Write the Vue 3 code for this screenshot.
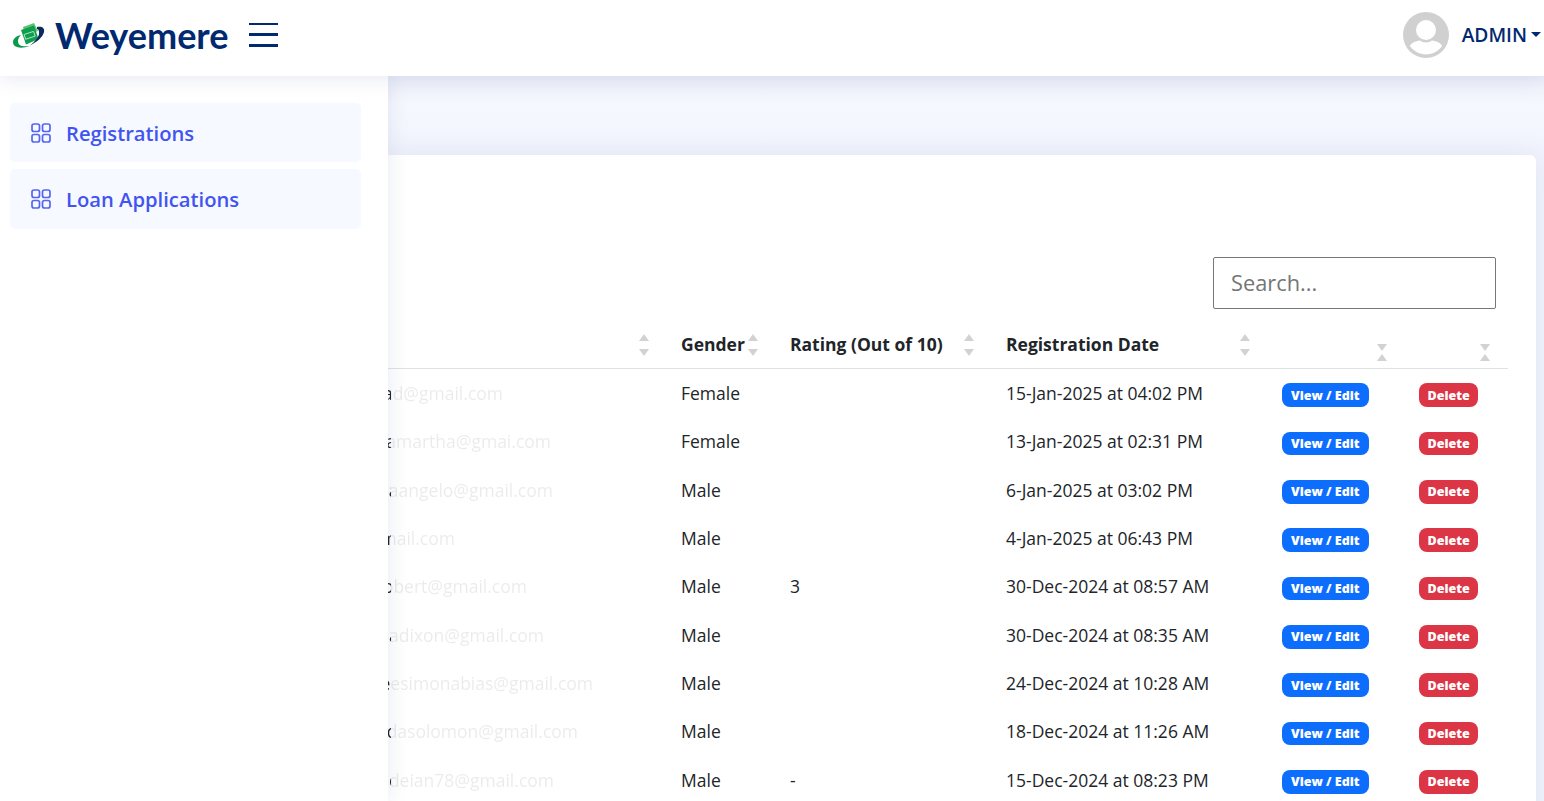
<template>
  <div class="page">
    <header class="topbar">
      <div class="brand">
        <svg class="logo" width="32" height="28" viewBox="0 0 32 28">
          <path d="M10 5 L21 1 L25 9 L12 14 Z" fill="#5cc46f" />
          <path d="M8 8 L21 3.500 L25.500 17 L13 22.500 Z" fill="#0f9d50" />
          <path d="M0 20 C0 26 8 27 17 24 C10 25 5 24 5 19 C5 17 6 15 8 13 C3 14 0 17 0 20 Z" fill="#0b9a4a" />
          <path d="M24 5 C29 4 32 6 31 10 C30 15 24 20 16 24 C22 20 27 14 26 10 C26 8 25 7 24 7 Z" fill="#0d2a5c" />
          <rect x="11.500" y="11" width="10" height="5" transform="rotate(-18 16 13)" fill="none" stroke="#c8ecd0" stroke-width="0.8" />
        </svg>
        <span class="brand-name">Weyemere</span>
      </div>
      <button class="menu-btn" aria-label="Menu">
        <span></span><span></span><span></span>
      </button>
      <div class="user">
        <svg class="avatar" width="46" height="46" viewBox="0 0 46 46">
          <defs>
            <clipPath id="circle-clip"><circle cx="23" cy="23" r="19.500" /></clipPath>
          </defs>
          <circle cx="23" cy="23" r="23" fill="#d0d0d0" />
          <circle cx="23" cy="18" r="10" fill="#fff" />
          <g clip-path="url(#circle-clip)">
            <path d="M6 46 L6 36 C7 31 13 29 17 28.500 C20 31 26 31 29 28.500 C33 29 39 31 40 36 L40 46 Z" fill="#fff" />
          </g>
        </svg>
        <span class="user-name">ADMIN</span>
        <span class="caret"></span>
      </div>
    </header>

    <div class="body-row">
      <aside class="sidebar">
        <a v-for="link in links" :key="link" class="side-link">
          <svg width="20" height="20" viewBox="0 0 20 20" fill="none" stroke="#5565f2" stroke-width="1.700">
            <rect x="1" y="1" width="7.500" height="7.500" rx="2" />
            <rect x="11.500" y="1" width="7.500" height="7.500" rx="2" />
            <rect x="1" y="11.500" width="7.500" height="7.500" rx="2" />
            <rect x="11.500" y="11.500" width="7.500" height="7.500" rx="2" />
          </svg>
          <span>{{ link }}</span>
        </a>
      </aside>

      <main class="content">
        <section class="card">
          <div class="search-row">
            <input class="search" type="text" placeholder="Search..." />
          </div>
          <div class="table">
            <div class="row head">
              <div v-for="col in columns" :key="col.key" class="th">
                <span>{{ col.label }}</span>
                <span class="sort" :class="{ flipped: col.flipped }">
                  <i class="up"></i><i class="down"></i>
                </span>
              </div>
            </div>
            <div v-for="r in rows" :key="r.email" class="row">
              <div class="email" :style="{ width: r.end + 'px' }"><span>{{ r.email }}</span></div>
              <div class="td">{{ r.gender }}</div>
              <div class="td">{{ r.rating }}</div>
              <div class="td">{{ r.date }}</div>
              <div class="td"><button class="btn blue">View / Edit</button></div>
              <div class="td"><button class="btn red">Delete</button></div>
            </div>
          </div>
        </section>
      </main>
    </div>
  </div>
</template>

<script setup>
const links = ['Registrations', 'Loan Applications']

const columns = [
  { key: 'email', label: '' },
  { key: 'gender', label: 'Gender' },
  { key: 'rating', label: 'Rating (Out of 10)' },
  { key: 'date', label: 'Registration Date' },
  { key: 'edit', label: '', flipped: true },
  { key: 'del', label: '', flipped: true },
]

// end = how far the clipped email text reaches past the sidebar edge
const rows = [
  { email: 'ad@gmail.com', end: 115, gender: 'Female', rating: '', date: '15-Jan-2025 at 04:02 PM' },
  { email: 'eamartha@gmai.com', end: 163, gender: 'Female', rating: '', date: '13-Jan-2025 at 02:31 PM' },
  { email: 'iaangelo@gmail.com', end: 165, gender: 'Male', rating: '', date: '6-Jan-2025 at 03:02 PM' },
  { email: 'mail.com', end: 67, gender: 'Male', rating: '', date: '4-Jan-2025 at 06:43 PM' },
  { email: 'obert@gmail.com', end: 139, gender: 'Male', rating: '3', date: '30-Dec-2024 at 08:57 AM' },
  { email: 'aadixon@gmail.com', end: 156, gender: 'Male', rating: '', date: '30-Dec-2024 at 08:35 AM' },
  { email: 'eesimonabias@gmail.com', end: 205, gender: 'Male', rating: '', date: '24-Dec-2024 at 10:28 AM' },
  { email: 'xdasolomon@gmail.com', end: 190, gender: 'Male', rating: '', date: '18-Dec-2024 at 11:26 AM' },
  { email: 'odeian78@gmail.com', end: 166, gender: 'Male', rating: '-', date: '15-Dec-2024 at 08:23 PM' },
]
</script>

<style>
html, body {
  margin: 0;
  overflow: hidden;
}
</style>

<style scoped>
.page {
  height: 801px;
  display: flex;
  flex-direction: column;
  overflow: hidden;
  font-family: "Open Sans", sans-serif;
  color: #212529;
}

.topbar {
  height: 76px;
  flex: none;
  box-sizing: border-box;
  display: flex;
  align-items: center;
  background: #fff;
  padding: 0 3px 7px 13px;
  box-shadow: 0 2px 20px rgba(1, 41, 112, 0.1);
  position: relative;
  z-index: 3;
}

.brand {
  display: flex;
  align-items: center;
  gap: 10px;
}

.logo {
  margin-top: 2px;
}

.brand-name {
  font-family: Lato, sans-serif;
  font-size: 36px;
  font-weight: 700;
  color: #012970;
  line-height: 1;
}

.menu-btn {
  margin-left: 21px;
  width: 29px;
  height: 24px;
  padding: 0;
  border: none;
  background: none;
  display: flex;
  flex-direction: column;
  justify-content: space-between;
}

.menu-btn span {
  height: 2.5px;
  background: #012970;
}

.user {
  margin-left: auto;
  display: flex;
  align-items: center;
}

.user-name {
  margin-left: 13px;
  font-size: 19.200px;
  font-weight: 600;
  color: #012970;
}

.caret {
  margin-left: 4px;
  border-top: 5px solid #012970;
  border-left: 5px solid transparent;
  border-right: 5px solid transparent;
}

.body-row {
  flex: 1;
  display: flex;
  min-height: 0;
}

.sidebar {
  width: 388px;
  flex: none;
  box-sizing: border-box;
  padding: 27px 27px 0 10px;
  display: flex;
  flex-direction: column;
  gap: 7px;
  background: #fff;
  box-shadow: 0 0 20px rgba(1, 41, 112, 0.1);
  position: relative;
  z-index: 2;
}

.side-link {
  height: 59.300px;
  flex: none;
  display: flex;
  align-items: center;
  gap: 15px;
  padding-left: 21px;
  background: #f6f9ff;
  border-radius: 5px;
  font-size: 20.200px;
  font-weight: 600;
  color: #4154f1;
}

.content {
  flex: 1;
  min-width: 0;
  padding: 79px 8px 0 0;
  background: linear-gradient(#eceff9 0, #f6f8ff 30px, #f1f4fd 79px);
}

.card {
  background: #fff;
  border-radius: 0 6px 0 0;
  height: 100%;
  padding: 102px 28px 0 0;
  box-shadow: 0 0 30px rgba(1, 41, 112, 0.08);
}

.search-row {
  display: flex;
  justify-content: flex-end;
  padding-right: 12px;
}

.search {
  width: 283px;
  height: 52px;
  box-sizing: border-box;
  padding: 0 17px 2px;
  border: 1px solid #777;
  border-radius: 2px;
  font-family: inherit;
  font-size: 21.800px;
  color: #212529;
  outline: none;
}

.search::placeholder {
  color: #757575;
  opacity: 1;
}

.row {
  display: grid;
  grid-template-columns: 281px 109px 216px 276px 137px 101px;
  height: 48.330px;
  align-items: center;
}

.head {
  margin-top: -1px;
  height: 60px;
  border-bottom: 1px solid #dee2e6;
  align-items: stretch;
  font-weight: 700;
  font-size: 17.500px;
}

.th {
  display: flex;
  align-items: center;
  justify-content: space-between;
  padding: 11px 20.500px 0 12px;
  white-space: nowrap;
}

.th:last-child {
  padding-right: 18px;
}

.sort {
  display: flex;
  flex-direction: column;
  gap: 8px;
  margin-top: 3px;
  flex: none;
}

.sort.flipped {
  flex-direction: column-reverse;
  gap: 3px;
  margin-top: 18px;
}

.sort i {
  display: block;
  width: 0;
  border-left: 5px solid transparent;
  border-right: 5px solid transparent;
}

.sort .up {
  border-bottom: 7px solid #d2d2d2;
}

.sort .down {
  border-top: 7px solid #d2d2d2;
}

.td {
  padding-left: 12px;
  font-size: 17.500px;
  white-space: nowrap;
}

.email {
  display: flex;
  justify-content: flex-end;
  overflow: hidden;
  white-space: nowrap;
  font-size: 17.500px;
  color: transparent;
  background: linear-gradient(90deg, #212529 3px, #ebebeb 3px);
  -webkit-background-clip: text;
  background-clip: text;
}

.email span {
  flex: none;
}

.btn {
  display: block;
  height: 23.500px;
  margin: 4px 0 0;
  padding: 0 8.500px;
  border: none;
  border-radius: 8px;
  color: #fff;
  font-family: inherit;
  font-size: 12.500px;
  font-weight: 800;
}

.blue {
  padding: 0 9px;
  background: #0d6efd;
}

.red {
  background: #dc3545;
}
</style>
